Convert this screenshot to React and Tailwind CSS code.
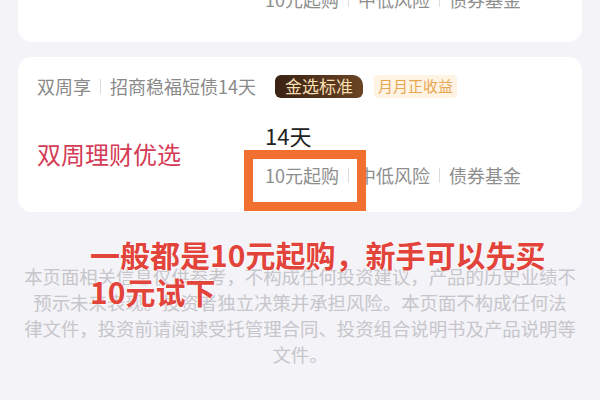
import React from 'react';

const Sep = () => <span className="inline-block w-px h-[15px] bg-[#dcdcdc] mx-[9px]" />;

const Tags = () => (
    <div className="flex items-center text-[18px] leading-[24px] text-[#8e8e8e] whitespace-nowrap">
        <span>10元起购</span>
        <Sep />
        <span>中低风险</span>
        <Sep />
        <span>债券基金</span>
    </div>
);

const App = () => {
    return (
        <div
            className="relative w-[600px] h-[400px] overflow-hidden bg-[#f4f3f8]"
            style={{ fontFamily: '"Noto Sans CJK SC", "Noto Sans", sans-serif' }}
        >
            {/* previous card, scrolled mostly out of view */}
            <div className="mx-[18px] -mt-[13px] bg-white rounded-b-[14px] pb-[31px]">
                <div className="pl-[247px]">
                    <Tags />
                </div>
            </div>

            {/* fund card */}
            <div className="mx-[18px] mt-[15px] bg-white rounded-[14px] pl-[19px] pt-[17px] pb-[25px]">
                <div className="flex items-center h-[24px] text-[18px] text-[#8a8a8a] whitespace-nowrap">
                    <span>双周享</span>
                    <Sep />
                    <span>招商稳福短债14天</span>
                    <span className="ml-[19px] h-[23px] px-[10px] flex items-center rounded-[6px] rounded-tr-[10px] bg-gradient-to-r from-[#3a2213] to-[#6a4424] text-[#f6dfb0] text-[17px]">
                        金选标准
                    </span>
                    <span className="ml-[11px] h-[23px] px-[4px] flex items-center rounded-[4px] bg-[#fff4e3] text-[#e8a652] text-[15px]">
                        月月正收益
                    </span>
                </div>

                <div className="flex items-center mt-[23px]">
                    <div className="w-[228px] text-[24px] leading-[32px] text-[#d43b55]">双周理财优选</div>
                    <div className="flex flex-col">
                        <div className="text-[22px] leading-[28px] text-[#222]">14天</div>
                        <div className="mt-[14px]">
                            <Tags />
                        </div>
                    </div>
                </div>
            </div>

            {/* disclaimer */}
            <div className="mt-[51px] text-center text-[18.4px] leading-[26px] text-[#c6c6cb] whitespace-nowrap">
                <p>本页面相关信息仅供参考，不构成任何投资建议，产品的历史业绩不</p>
                <p>预示未来表现。投资者独立决策并承担风险。本页面不构成任何法</p>
                <p>律文件，投资前请阅读受托管理合同、投资组合说明书及产品说明等</p>
                <p>文件。</p>
            </div>

            {/* annotation overlays */}
            <div className="absolute left-[244px] top-[150px] w-[122px] h-[61px] border-[9px] border-[#f1702f]" />
            <div className="absolute left-[90px] top-[236px] text-[30px] leading-[37px] font-semibold text-[#e2433a] [text-shadow:0_0_2px_#fff,0_0_2px_#fff] whitespace-nowrap">
                <div>一般都是10元起购，新手可以先买</div>
                <div>10元试下</div>
            </div>
        </div>
    );
};

export default App;
